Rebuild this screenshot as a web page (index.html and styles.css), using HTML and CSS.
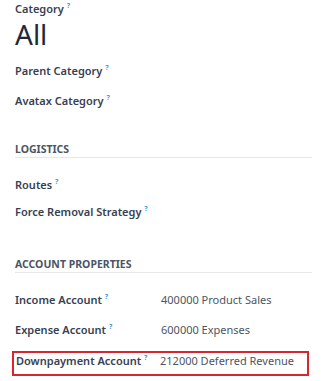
FILE: index.html
```html
<!DOCTYPE html>
<html lang="en">
<head>
  <meta charset="UTF-8">
  <meta name="viewport" content="width=device-width, initial-scale=1.0">
  <title>Product Category</title>
  <link rel="stylesheet" href="styles.css">
</head>
<body>
  <div class="sheet">
    <div class="title-label">Category <sup class="help">?</sup></div>
    <div class="title">All</div>

    <div class="field"><span class="label">Parent Category <sup class="help">?</sup></span></div>
    <div class="field"><span class="label">Avatax Category <sup class="help">?</sup></span></div>

    <div class="group logistics">
      <div class="group-title">LOGISTICS</div>
      <div class="field"><span class="label">Routes <sup class="help">?</sup></span></div>
      <div class="field tight"><span class="label">Force Removal Strategy <sup class="help">?</sup></span></div>
    </div>

    <div class="group accounts">
      <div class="group-title">ACCOUNT PROPERTIES</div>
      <div class="field row"><span class="label">Income Account <sup class="help">?</sup></span><span class="value">400000 Product Sales</span></div>
      <div class="field row"><span class="label">Expense Account <sup class="help">?</sup></span><span class="value">600000 Expenses</span></div>
      <div class="field row highlight"><span class="label">Downpayment Account <sup class="help">?</sup></span><span class="value">212000 Deferred Revenue</span></div>
    </div>
  </div>
</body>
</html>
```
FILE: styles.css
```css
body {
  font-family: 'Noto Sans', 'Open Sans', sans-serif;
  background-color: white;
  margin: 0;
  color: #374151;
}
.sheet {
  padding: 0 11px 0 15px;
}
.title-label {
  font-size: 11px;
  font-weight: 600;
  line-height: 16px;
  margin-top: 1px;
}
.title {
  font-size: 28px;
  line-height: 30px;
  color: #1f2937;
  margin-top: 2px;
}
.help {
  color: #3a9bd5;
  font-size: 7px;
  font-weight: 700;
  line-height: 0;
  vertical-align: 5px;
}
.field {
  font-size: 11px;
  line-height: 16px;
  margin-top: 14px;
}
.label {
  font-weight: 600;
  color: #374151;
}
.group-title {
  font-size: 10.5px;
  font-weight: 700;
  color: #4b5563;
  line-height: 14px;
  padding-bottom: 1px;
  border-bottom: 1px solid #e5e7eb;
}
.logistics {
  margin-top: 33px;
}
.group-title + .field {
  margin-top: 19px;
}
.field.tight {
  margin-top: 11px;
}
.accounts {
  margin-top: 37px;
}
.row {
  display: flex;
}
.row .label {
  width: 146px;
  flex: none;
}
.value {
  color: #4b5563;
}
.highlight {
  margin-top: 13px;
  margin-left: -3px;
  padding: 0 0 5px 2px;
  border: 2px solid #d7262f;
  width: 291px;
}
.highlight .label {
  width: 144px;
}
```
